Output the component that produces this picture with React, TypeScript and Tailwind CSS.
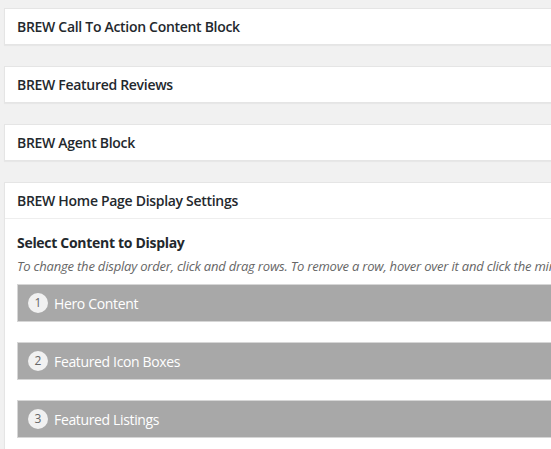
import React from "react";

const font = { fontFamily: '"Open Sans", "Noto Sans", sans-serif' };

function Postbox({ title }: { title: string }) {
  return (
    <div className="mb-[21px] border border-[#e5e5e5] bg-white shadow-[0_1px_1px_rgba(0,0,0,0.04)]">
      <h2 className="px-3 py-2 text-[14px] leading-[19px] font-semibold tracking-[-0.3px] text-[#23282d] whitespace-nowrap">
        {title}
      </h2>
    </div>
  );
}

function Row({ n, label }: { n: number; label: string }) {
  return (
    <div className="mb-[20px] flex h-[38px] items-center border border-[#d6d6d6] bg-[#a8a8a8] pl-[10px]">
      <span className="flex h-[20px] w-[20px] items-center justify-center rounded-full bg-[#f1f1f1] text-[12px] leading-none text-[#666]">
        {n}
      </span>
      <span className="ml-[6px] text-[14px] leading-[19px] tracking-[-0.35px] text-white whitespace-nowrap">{label}</span>
    </div>
  );
}

export default function App() {
  return (
    <div className="h-[449px] w-[551px] overflow-hidden bg-[#f1f1f1] pl-[4px] pt-[8px]" style={font}>
      <div className="w-[640px]">
        <Postbox title="BREW Call To Action Content Block" />
        <Postbox title="BREW Featured Reviews" />
        <Postbox title="BREW Agent Block" />
        <div className="border border-[#e5e5e5] bg-white shadow-[0_1px_1px_rgba(0,0,0,0.04)]">
          <h2 className="border-b border-[#eee] px-3 py-2 text-[14px] leading-[19px] font-semibold tracking-[-0.3px] text-[#23282d] whitespace-nowrap">
            BREW Home Page Display Settings
          </h2>
          <div className="px-3 pt-[14px] pb-3">
            <div className="text-[14px] leading-[20px] font-bold tracking-[-0.3px] text-[#23282d] whitespace-nowrap">
              Select Content to Display
            </div>
            <div className="mt-[4px] text-[13px] leading-[19px] italic tracking-[-0.2px] text-[#666] whitespace-nowrap">
              To change the display order, click and drag rows. To remove a row, hover over it and click the minus button.
            </div>
            <div className="mt-[8px]">
              <Row n={1} label="Hero Content" />
              <Row n={2} label="Featured Icon Boxes" />
              <Row n={3} label="Featured Listings" />
            </div>
          </div>
        </div>
      </div>
    </div>
  );
}
